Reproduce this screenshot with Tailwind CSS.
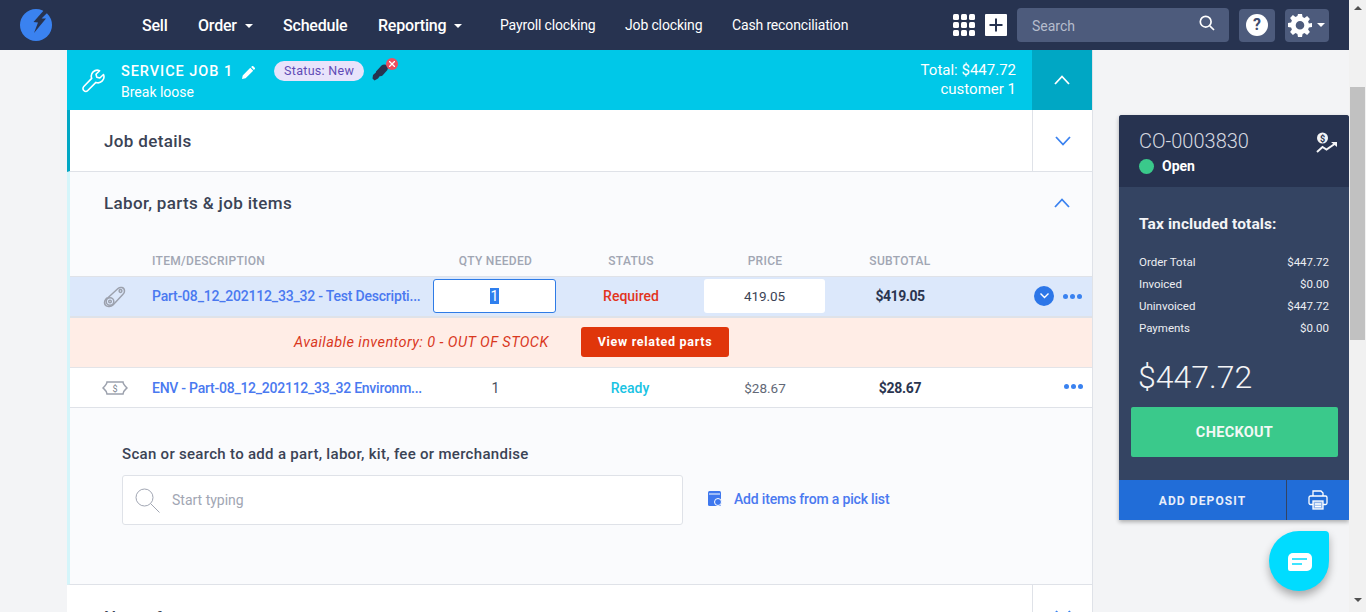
<!DOCTYPE html>
<html>
<head>
<meta charset="utf-8">
<script src="https://cdn.jsdelivr.net/npm/@tailwindcss/browser@4"></script>
</head>
<body class="m-0 overflow-hidden">
<div class="relative flex h-[612px] w-[1366px] overflow-hidden bg-[#f3f4f6] font-['Roboto',sans-serif] text-[#2a3550]">
  <div class="flex h-[612px] w-[1349px] flex-col">
    <header class="flex h-[50px] shrink-0 items-center bg-[#273350] text-white">
      <svg class="ml-[20px] h-[32px] w-[32px]" viewBox="0 0 32 32"><circle cx="16" cy="16" r="16" fill="#3a82f0"/><path d="M25 0 L13.500 13 L18 13.500 L14 24 L26 9.500 L21.500 9.500 L30 1 L27 -1 Z" fill="#273350"/></svg>
      <nav class="ml-[90px] flex items-center pt-[2px] text-[16px] font-medium tracking-[-0.2px]">
        <span class="w-[56px]">Sell</span>
        <span class="flex w-[85px] items-center">Order<i class="ml-[8px] h-0 w-0 border-x-[4px] border-t-[4px] border-x-transparent border-t-white"></i></span>
        <span class="w-[95px]">Schedule</span>
        <span class="flex w-[122px] items-center">Reporting<i class="ml-[8px] h-0 w-0 border-x-[4px] border-t-[4px] border-x-transparent border-t-white"></i></span>
      </nav>
      <nav class="flex items-center text-[14px] tracking-[-0.15px]">
        <span class="w-[125px]">Payroll clocking</span>
        <span class="w-[107px]">Job clocking</span>
        <span>Cash reconciliation</span>
      </nav>
      <div class="ml-auto flex items-center">
        <div class="grid h-[22px] w-[22px] grid-cols-3 gap-[2px]">
          <i class="rounded-[1.5px] bg-white"></i><i class="rounded-[1.5px] bg-white"></i><i class="rounded-[1.5px] bg-white"></i>
          <i class="rounded-[1.5px] bg-white"></i><i class="rounded-[1.5px] bg-white"></i><i class="rounded-[1.5px] bg-white"></i>
          <i class="rounded-[1.5px] bg-white"></i><i class="rounded-[1.5px] bg-white"></i><i class="rounded-[1.5px] bg-white"></i>
        </div>
        <svg class="ml-[10px] h-[22px] w-[22px]" viewBox="0 0 22 22"><rect width="22" height="22" rx="1" fill="#fff"/><path d="M11 4.500v13M4.500 11h13" stroke="#273350" stroke-width="2"/></svg>
        <div class="ml-[10px] flex h-[34px] w-[212px] items-center justify-between rounded-[4px] bg-[#4d5b7c] pl-[15px] pr-[14px] text-[14px] text-[#b6bdcd]">
          <span class="pt-[2px]">Search</span>
          <svg class="mb-[5px] h-[16px] w-[16px]" viewBox="0 0 16 16" fill="none" stroke="#fff" stroke-width="1.700"><circle cx="6.700" cy="6.700" r="5.400"/><path d="M10.800 10.800 15 15"/></svg>
        </div>
        <div class="ml-[10px] flex h-[33px] w-[36px] items-center justify-center rounded-[4px] bg-[#4d5b7c]">
          <div class="flex h-[22px] w-[22px] items-center justify-center rounded-full bg-white text-[16px] font-bold text-[#3f4d6e]">?</div>
        </div>
        <div class="ml-[10px] mr-[20px] flex h-[33px] w-[44px] items-center rounded-[4px] bg-[#4d5b7c] pl-[3px]">
          <svg class="h-[24px] w-[24px]" viewBox="0 0 24 24"><path fill="#fff" fill-rule="evenodd" d="M10 1h4l.6 3.100 1.900.8 2.600-1.800 2.800 2.800-1.800 2.600.8 1.900L24 10v4l-3.100.6-.8 1.900 1.800 2.600-2.800 2.800-2.600-1.800-1.900.8L14 24h-4l-.6-3.100-1.900-.8-2.600 1.800-2.800-2.800 1.800-2.600-.8-1.900L0 14v-4l3.100-.6.8-1.900L2.100 4.900l2.800-2.800 2.600 1.800 1.900-.8zM12 8a4.300 4.300 0 1 0 0 8.600a4.300 4.300 0 0 0 0-8.600z"/></svg>
          <i class="ml-[5px] h-0 w-0 border-x-[4px] border-t-[4px] border-x-transparent border-t-white"></i>
        </div>
      </div>
    </header>

    <div class="flex min-h-0 flex-1 overflow-hidden">
      <main class="ml-[67px] w-[1026px] shrink-0 border-r border-[#dfe2e8]">
        <section class="flex h-[60px] bg-[#00c8e8] text-white">
          <svg class="ml-[15px] mt-[19px] h-[24px] w-[24px]" viewBox="0 0 24 24" fill="none" stroke="#fff" stroke-width="1.600" stroke-linejoin="round"><path d="M21.500 5.500 17.800 9l-3-.8-.8-3 3.600-3.500a6 6 0 0 0-7.900 7.700L1.800 17.500a2.800 2.800 0 0 0 4 4l8.100-8.100a6 6 0 0 0 7.600-7.900z"/></svg>
          <div class="ml-[15px] pt-[13px]">
            <div class="flex h-[18px] items-center">
              <span class="text-[14.500px] font-medium tracking-[0.95px]">SERVICE JOB 1</span>
              <svg class="ml-[9px] h-[13px] w-[13px]" viewBox="0 0 13 13"><path fill="#fff" d="M0 13l.7-3.600L8.300 1.800l2.900 2.900-7.600 7.600zM9.100 1 10 .2a1 1 0 0 1 1.300 0l1.500 1.500a1 1 0 0 1 0 1.300l-.9.900z"/></svg>
              <span class="ml-[19px] mt-[-2px] flex h-[20px] w-[90px] items-center justify-center rounded-full bg-[#e8e3fb] text-[12.500px] tracking-[0.3px] text-[#5f4bb6]">Status: New</span>
              <span class="relative ml-[8px] mt-[-2px] h-[20px] w-[28px]">
                <svg class="mt-[1px] h-[19px] w-[17px]" viewBox="0 0 17 19" fill="#273350"><path d="M2.500 18.500 .5 16.500l.5-3.500 4.500-4 3.500 3.500-3 4z"/><path d="M4.500 9l5-5.500c1.500-1.500 4-1.500 5.500 0 1.300 1.300 1.300 3.500 0 5l-4.500 5c-1.200 1-2.500 1-3.500 0L4.500 11.500c-.8-.8-.8-1.800 0-2.500z"/></svg>
                <span class="absolute left-[14px] top-[-3px] flex h-[12px] w-[12px] items-center justify-center rounded-full bg-[#ef4f5f]"><svg class="h-[6px] w-[6px]" viewBox="0 0 6 6" stroke="#fff" stroke-width="1.300"><path d="M0 0l6 6M6 0 0 6"/></svg></span>
              </span>
            </div>
            <div class="mt-[3px] text-[14px] leading-[17px]">Break loose</div>
          </div>
          <div class="ml-auto mr-[16px] pt-[11px] text-right text-[15px] leading-[19px]">
            <div>Total: $447.72</div>
            <div>customer 1</div>
          </div>
          <div class="flex w-[60px] items-center justify-center bg-[#00a7c4]">
            <svg class="h-[10px] w-[16px]" viewBox="0 0 16 10" fill="none" stroke="#fff" stroke-width="1.800"><path d="M1 9l7-7.500L15 9"/></svg>
          </div>
        </section>

        <section class="flex h-[62px] border-b border-l-[3px] border-[#dfe2e8] border-l-[#00a7c4] bg-white">
          <div class="flex flex-1 items-center pl-[34px] pt-[3px] text-[17px] font-medium tracking-[0.35px] text-[#3b4355]">Job details</div>
          <div class="flex w-[60px] items-center justify-center border-l border-[#dfe2e8]">
            <svg class="h-[10px] w-[16px]" viewBox="0 0 16 10" fill="none" stroke="#3a82f0" stroke-width="1.800"><path d="M1 1l7 7.500L15 1"/></svg>
          </div>
        </section>

        <section class="h-[413px] border-b border-l-[3px] border-[#dfe2e8] border-l-[#d4f5fa] bg-[#fafbfd]">
          <div class="flex h-[62px] items-center pl-[34px] text-[17px] font-medium tracking-[0.35px] text-[#3b4355]">
            <span class="pt-[1px]">Labor, parts &amp; job items</span>
            <svg class="ml-auto mr-[22px] h-[10px] w-[16px]" viewBox="0 0 16 10" fill="none" stroke="#3a82f0" stroke-width="1.800"><path d="M1 9l7-7.500L15 9"/></svg>
          </div>
          <div class="grid h-[42px] grid-cols-[82px_281px_125px_146px_122px_148px_119px] items-center pt-[11px] text-center text-[12px] font-medium tracking-[0.3px] text-[#a1a6b3]">
            <span></span>
            <span class="text-left">ITEM/DESCRIPTION</span>
            <span>QTY NEEDED</span>
            <span>STATUS</span>
            <span>PRICE</span>
            <span>SUBTOTAL</span>
            <span></span>
          </div>
          <div class="grid h-[42px] grid-cols-[82px_281px_125px_146px_122px_148px_119px] items-center border-t border-b-2 border-[#dfe2e8] bg-[#dce8fb] text-center text-[14px]">
            <div class="flex justify-center pl-[7px]">
              <svg class="h-[24px] w-[24px]" viewBox="0 0 24 24" fill="none" stroke="#9ca1ad" stroke-width="1.500"><path d="M3 14.500 15 3.500c2-1.800 6.500-1.500 6.500 2.500 0 1.500-.6 2.500-1.500 3.300L10 20c-2.500 2.500-8.500 2-8.500-2.500 0-1.200.5-2.300 1.500-3.500z"/><circle cx="7" cy="16.500" r="3.800"/><circle cx="7" cy="16.500" r="1.300"/><circle cx="17.500" cy="6" r="1.400"/></svg>
            </div>
            <div class="overflow-hidden text-left font-medium tracking-[-0.2px] whitespace-nowrap text-[#4a79f0]">Part-08_12_202112_33_32 - Test Descripti...</div>
            <div class="mb-[1px] flex h-[34px] w-[123px] items-center justify-center rounded-[3px] border border-[#2e7be6] bg-white">
              <span class="bg-[#2f7fee] px-[1px] leading-[16px] text-white">1</span>
            </div>
            <div class="font-medium text-[#e2341d]">Required</div>
            <div class="mb-[1px] flex h-[34px] w-[121px] items-center justify-center rounded-[3px] bg-white text-[13.500px] tracking-[-0.1px] text-[#3b4355]">419.05</div>
            <div class="font-bold tracking-[-0.45px]">$419.05</div>
            <div class="mb-[1px] ml-[60px] flex items-center">
              <span class="flex h-[20px] w-[20px] items-center justify-center rounded-full bg-[#2c76e8]"><svg class="h-[6px] w-[9px]" viewBox="0 0 9 6" fill="none" stroke="#fff" stroke-width="1.400"><path d="M.5.5l4 4 4-4"/></svg></span>
              <span class="ml-[9px] flex gap-[2px]"><i class="h-[5px] w-[5px] rounded-full bg-[#3a82f0]"></i><i class="h-[5px] w-[5px] rounded-full bg-[#3a82f0]"></i><i class="h-[5px] w-[5px] rounded-full bg-[#3a82f0]"></i></span>
            </div>
          </div>
          <div class="flex h-[50px] items-center border-b border-[#e3e4e8] bg-[#ffede6]">
            <span class="ml-[224px] w-[287px] pt-[1px] text-[14.500px] tracking-[0.43px] text-[#d9381e] italic">Available inventory: 0 - OUT OF STOCK</span>
            <span class="mb-[2px] flex h-[30px] w-[148px] items-center justify-center rounded-[3px] bg-[#e0360b] pt-[2px] text-[12.500px] font-bold tracking-[0.7px] text-white">View related parts</span>
          </div>
          <div class="grid h-[40px] grid-cols-[82px_281px_125px_146px_122px_148px_119px] items-center border-b border-[#dfe2e8] bg-white pt-[1px] text-center text-[14px]">
            <div class="flex justify-center pl-[7px]">
              <svg class="h-[14px] w-[26px]" viewBox="0 0 26 14" fill="none" stroke="#9ca1ad" stroke-width="1.500"><path d="M5 1h16c0 2 2 4 4 6-2 2-4 3-4 6H5c0-3-2-4-4-6 2-2 4-4 4-6z"/><text x="13" y="10.500" text-anchor="middle" font-family="Roboto" font-size="9" fill="#7d8391" stroke="none">$</text></svg>
            </div>
            <div class="overflow-hidden text-left font-medium tracking-[-0.25px] whitespace-nowrap text-[#4a79f0]">ENV - Part-08_12_202112_33_32 Environm...</div>
            <div class="text-[#4a5060]">1</div>
            <div class="pr-[2px] font-medium text-[#19c3e3]">Ready</div>
            <div class="text-[13.500px] text-[#626876]">$28.67</div>
            <div class="font-bold tracking-[-0.25px]">$28.67</div>
            <div class="mb-[4px] ml-[90px] flex gap-[2px]"><i class="h-[5px] w-[5px] rounded-full bg-[#3a82f0]"></i><i class="h-[5px] w-[5px] rounded-full bg-[#3a82f0]"></i><i class="h-[5px] w-[5px] rounded-full bg-[#3a82f0]"></i></div>
          </div>
          <div class="pl-[52px] pt-[37px]">
            <div class="text-[15px] font-medium leading-[18px] tracking-[0.3px] text-[#3b4355]">Scan or search to add a part, labor, kit, fee or merchandise</div>
            <div class="mt-[12px] flex items-center">
              <div class="flex h-[50px] w-[561px] items-center rounded-[3px] border border-[#dfe2e8] bg-white pl-[12px] text-[14px] text-[#a1a6b3]">
                <svg class="h-[25px] w-[25px]" viewBox="0 0 25 25" fill="none" stroke="#a1a6b3" stroke-width="1"><circle cx="9.500" cy="9.500" r="8.500"/><path d="M15.500 15.500l9 9"/></svg>
                <span class="ml-[12px]">Start typing</span>
              </div>
              <svg class="ml-[25px] mt-[-4px] h-[15px] w-[14px]" viewBox="0 0 14 15"><rect width="13" height="15" rx="1.500" fill="#3f78ee"/><path d="M1 3h11" stroke="#fff"/><circle cx="10" cy="11" r="3.500" fill="#3f78ee" stroke="#fff"/></svg>
              <span class="ml-[12px] mt-[-2px] text-[14px] font-medium tracking-[-0.18px] text-[#4a79f0]">Add items from a pick list</span>
            </div>
          </div>
        </section>

        <section class="flex h-[60px] bg-white">
          <div class="flex-1 pl-[37px] pt-[20px] text-[17px] font-medium tracking-[0.35px] text-[#3b4355]">Notes for customer</div>
          <div class="flex w-[60px] justify-center border-l border-[#dfe2e8] pt-[25px]">
            <svg class="h-[10px] w-[16px]" viewBox="0 0 16 10" fill="none" stroke="#3a82f0" stroke-width="1.800"><path d="M1 1l7 7.500L15 1"/></svg>
          </div>
        </section>
      </main>

      <aside class="ml-[26px] mt-[65px] h-[405px] w-[230px] shrink-0 overflow-hidden rounded-t-[3px] bg-[#344462] text-white shadow-[0_2px_4px_rgba(0,0,0,0.3)]">
        <div class="relative h-[72px] bg-[#273350] pl-[20px] pt-[15px]">
          <div class="text-[20px] leading-[23px] font-light tracking-[0px] text-[#d6d9e0]">CO-0003830</div>
          <div class="mt-[5px] flex items-center text-[14px] font-bold leading-[16px]"><i class="mr-[8px] h-[15px] w-[15px] rounded-full bg-[#3ac98b]"></i>Open</div>
          <svg class="absolute right-[11px] top-[17px] h-[24px] w-[22px]" viewBox="0 0 22 24" fill="none"><circle cx="6.500" cy="6" r="5.500" fill="#f3f4f6"/><text x="6.500" y="9.500" text-anchor="middle" font-family="Roboto" font-size="9" font-weight="700" fill="#273350">$</text><path d="M1 20l5.500-5 4 2.500L20 11" stroke="#f3f4f6" stroke-width="2"/><path d="M15 10h6v5z" fill="#f3f4f6"/></svg>
        </div>
        <div class="px-[20px]">
          <div class="pt-[28px] text-[15.500px] font-bold leading-[18px] tracking-[0.1px] text-[#f3f4f6]">Tax included totals:</div>
          <div class="mt-[19px] flex h-[22px] items-center justify-between text-[11.500px] text-[#eceef2]"><span>Order Total</span><span>$447.72</span></div>
          <div class="flex h-[22px] items-center justify-between text-[11.500px] text-[#eceef2]"><span>Invoiced</span><span>$0.00</span></div>
          <div class="flex h-[22px] items-center justify-between text-[11.500px] text-[#eceef2]"><span>Uninvoiced</span><span>$447.72</span></div>
          <div class="flex h-[22px] items-center justify-between text-[11.500px] text-[#eceef2]"><span>Payments</span><span>$0.00</span></div>
          <div class="ml-[-1px] mt-[15px] h-[44px] text-[32px] leading-[44px] font-light text-[#f3f4f6]">$447.72</div>
        </div>
        <div class="ml-[12px] mr-[11px] mt-[8px] flex h-[50px] items-center justify-center rounded-[2px] bg-[#3ac98b] pt-[1px] text-[14.500px] font-bold tracking-[0.3px] text-[#f3f8f5]">CHECKOUT</div>
        <div class="mt-[23px] flex h-[40px] bg-[#216dd8]">
          <div class="flex flex-1 items-center justify-center border-r border-[#344462] pt-[1px] text-[12px] font-bold tracking-[1.100px] text-[#e8eefa]">ADD DEPOSIT</div>
          <div class="flex w-[62px] items-center justify-center">
            <svg class="h-[20px] w-[20px]" viewBox="0 0 20 20" fill="none" stroke="#fff" stroke-width="1.300"><path d="M5 6V1h8l2 2v3"/><rect x="1" y="6" width="18" height="8.500" rx="1.500"/><rect x="5" y="11" width="10" height="8" fill="#8fb4ea"/><path d="M7 14h6M7 16.500h6"/></svg>
          </div>
        </div>
      </aside>
    </div>
  </div>

  <div class="flex w-[17px] shrink-0 flex-col items-center bg-[#f1f1f1]">
    <i class="mt-[6px] h-0 w-0 border-x-[4px] border-b-[4px] border-x-transparent border-b-[#505050]"></i>
    <div class="mt-[77px] h-[253px] w-[15px] bg-[#c1c1c1]"></div>
    <i class="mt-[258px] h-0 w-0 border-x-[4px] border-t-[4px] border-x-transparent border-t-[#505050]"></i>
  </div>

  <div class="absolute left-[1269px] top-[531px] flex h-[60px] w-[60px] items-center justify-center rounded-[50%] rounded-tr-[4px] bg-[#00dcff] shadow-[0_5px_8px_rgba(0,0,0,0.3)]">
    <svg class="ml-[2px] mt-[2px] h-[18px] w-[24px]" viewBox="0 0 24 18"><path fill="#fff" d="M5 0h14a5 5 0 0 1 5 5v8a5 5 0 0 1-5 5H2a2 2 0 0 1-2-2V5a5 5 0 0 1 5-5z"/><path d="M4 6h15M4 11h10" stroke="#00dcff" stroke-width="1.600"/></svg>
  </div>
</div>
</body>
</html>
